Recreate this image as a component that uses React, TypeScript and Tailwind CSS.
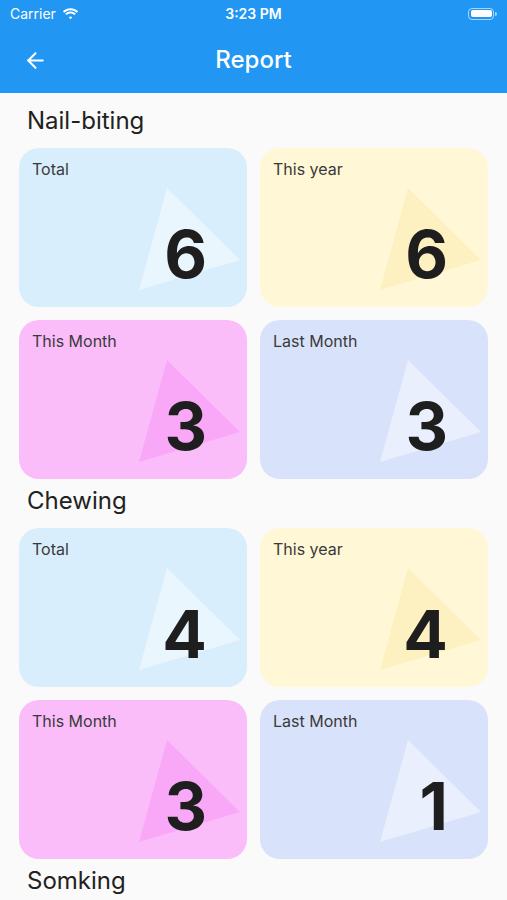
import { ArrowLeft } from "lucide-react";

type Stat = { label: string; value: number; tone: "blue" | "yellow" | "pink" | "lavender" };

const tones = {
  blue: { card: "bg-[#d8eefd]", tri: "fill-white/45" },
  yellow: { card: "bg-[#fff7d6]", tri: "fill-[#fdf1c2]" },
  pink: { card: "bg-[#fbbdfa]", tri: "fill-[#f8a8f7]" },
  lavender: { card: "bg-[#d9e2fb]", tri: "fill-white/45" },
};

// the third section's cards sit below the fold, only its heading shows
const sections: { title: string; stats: Stat[] }[] = [
  {
    title: "Nail-biting",
    stats: [
      { label: "Total", value: 6, tone: "blue" },
      { label: "This year", value: 6, tone: "yellow" },
      { label: "This Month", value: 3, tone: "pink" },
      { label: "Last Month", value: 3, tone: "lavender" },
    ],
  },
  {
    title: "Chewing",
    stats: [
      { label: "Total", value: 4, tone: "blue" },
      { label: "This year", value: 4, tone: "yellow" },
      { label: "This Month", value: 3, tone: "pink" },
      { label: "Last Month", value: 1, tone: "lavender" },
    ],
  },
  { title: "Somking", stats: [] },
];

function StatusBar() {
  return (
    <div className="flex h-[27px] items-center justify-between px-[10px] text-[14px] text-white">
      <div className="flex w-[120px] items-center gap-[6px]">
        <span>Carrier</span>
        <svg width="17" height="12" viewBox="0 0 17 12" className="fill-white">
          <path d="M8.5 2.2c2.4 0 4.6.9 6.3 2.5l1.3-1.4C14 1.3 11.4.2 8.5.2S3 1.3.9 3.3l1.3 1.4C3.9 3.1 6.1 2.2 8.5 2.2z" />
          <path d="M8.5 5.4c1.5 0 2.9.6 4 1.6l1.3-1.4C12.4 4.2 10.5 3.4 8.5 3.4s-3.9.8-5.3 2.2L4.5 7c1.1-1 2.5-1.6 4-1.6z" />
          <path d="M8.5 8.5c.7 0 1.3.3 1.8.7L8.5 11.2 6.7 9.2c.5-.4 1.1-.7 1.8-.7z" />
        </svg>
      </div>
      <span className="font-semibold">3:23 PM</span>
      <div className="flex w-[120px] justify-end">
        <div className="flex items-center">
          <div className="h-[12px] w-[26px] rounded-[4px] border border-white/60 p-[1.5px]">
            <div className="h-full w-full rounded-[2px] bg-white" />
          </div>
          <div className="ml-[1px] h-[4px] w-[1.5px] rounded-r bg-white/60" />
        </div>
      </div>
    </div>
  );
}

function StatCard({ stat }: { stat: Stat }) {
  const tone = tones[stat.tone];
  return (
    <div className={`relative flex h-[159px] flex-col justify-between overflow-hidden rounded-[20px] ${tone.card}`}>
      <svg className="absolute inset-0 h-full w-full" viewBox="0 0 228 159" aria-hidden>
        <polygon points="148,40 221,112 120,142" className={tone.tri} />
      </svg>
      <span className="relative pl-[13px] pt-[11px] text-[16px] leading-[20px] text-[#3a3a3a]">{stat.label}</span>
      <span className="relative mb-[20px] mr-[40px] self-end text-[66px] font-bold leading-none text-[#1e1e1e]">
        {stat.value}
      </span>
    </div>
  );
}

export default function App() {
  return (
    <div className="h-[900px] w-[507px] overflow-hidden bg-[#fafafa] font-['Inter',sans-serif]">
      <header className="bg-[#2196f3]">
        <StatusBar />
        <div className="relative flex h-[66px] items-center justify-center">
          <ArrowLeft className="absolute left-[23px] top-[21px] h-[25px] w-[25px] text-white" strokeWidth={2} />
          <h1 className="text-[24px] font-medium text-white">Report</h1>
        </div>
      </header>
      <main className="px-[19px] pt-[6px]">
        {sections.map((section) => (
          <section key={section.title}>
            <h2 className="flex h-[49px] items-center pb-[6px] pl-[8px] text-[24px] text-[#212121]">{section.title}</h2>
            {section.stats.length > 0 && (
              <div className="grid grid-cols-2 gap-[13px]">
                {section.stats.map((stat) => (
                  <StatCard key={stat.label} stat={stat} />
                ))}
              </div>
            )}
          </section>
        ))}
      </main>
    </div>
  );
}
